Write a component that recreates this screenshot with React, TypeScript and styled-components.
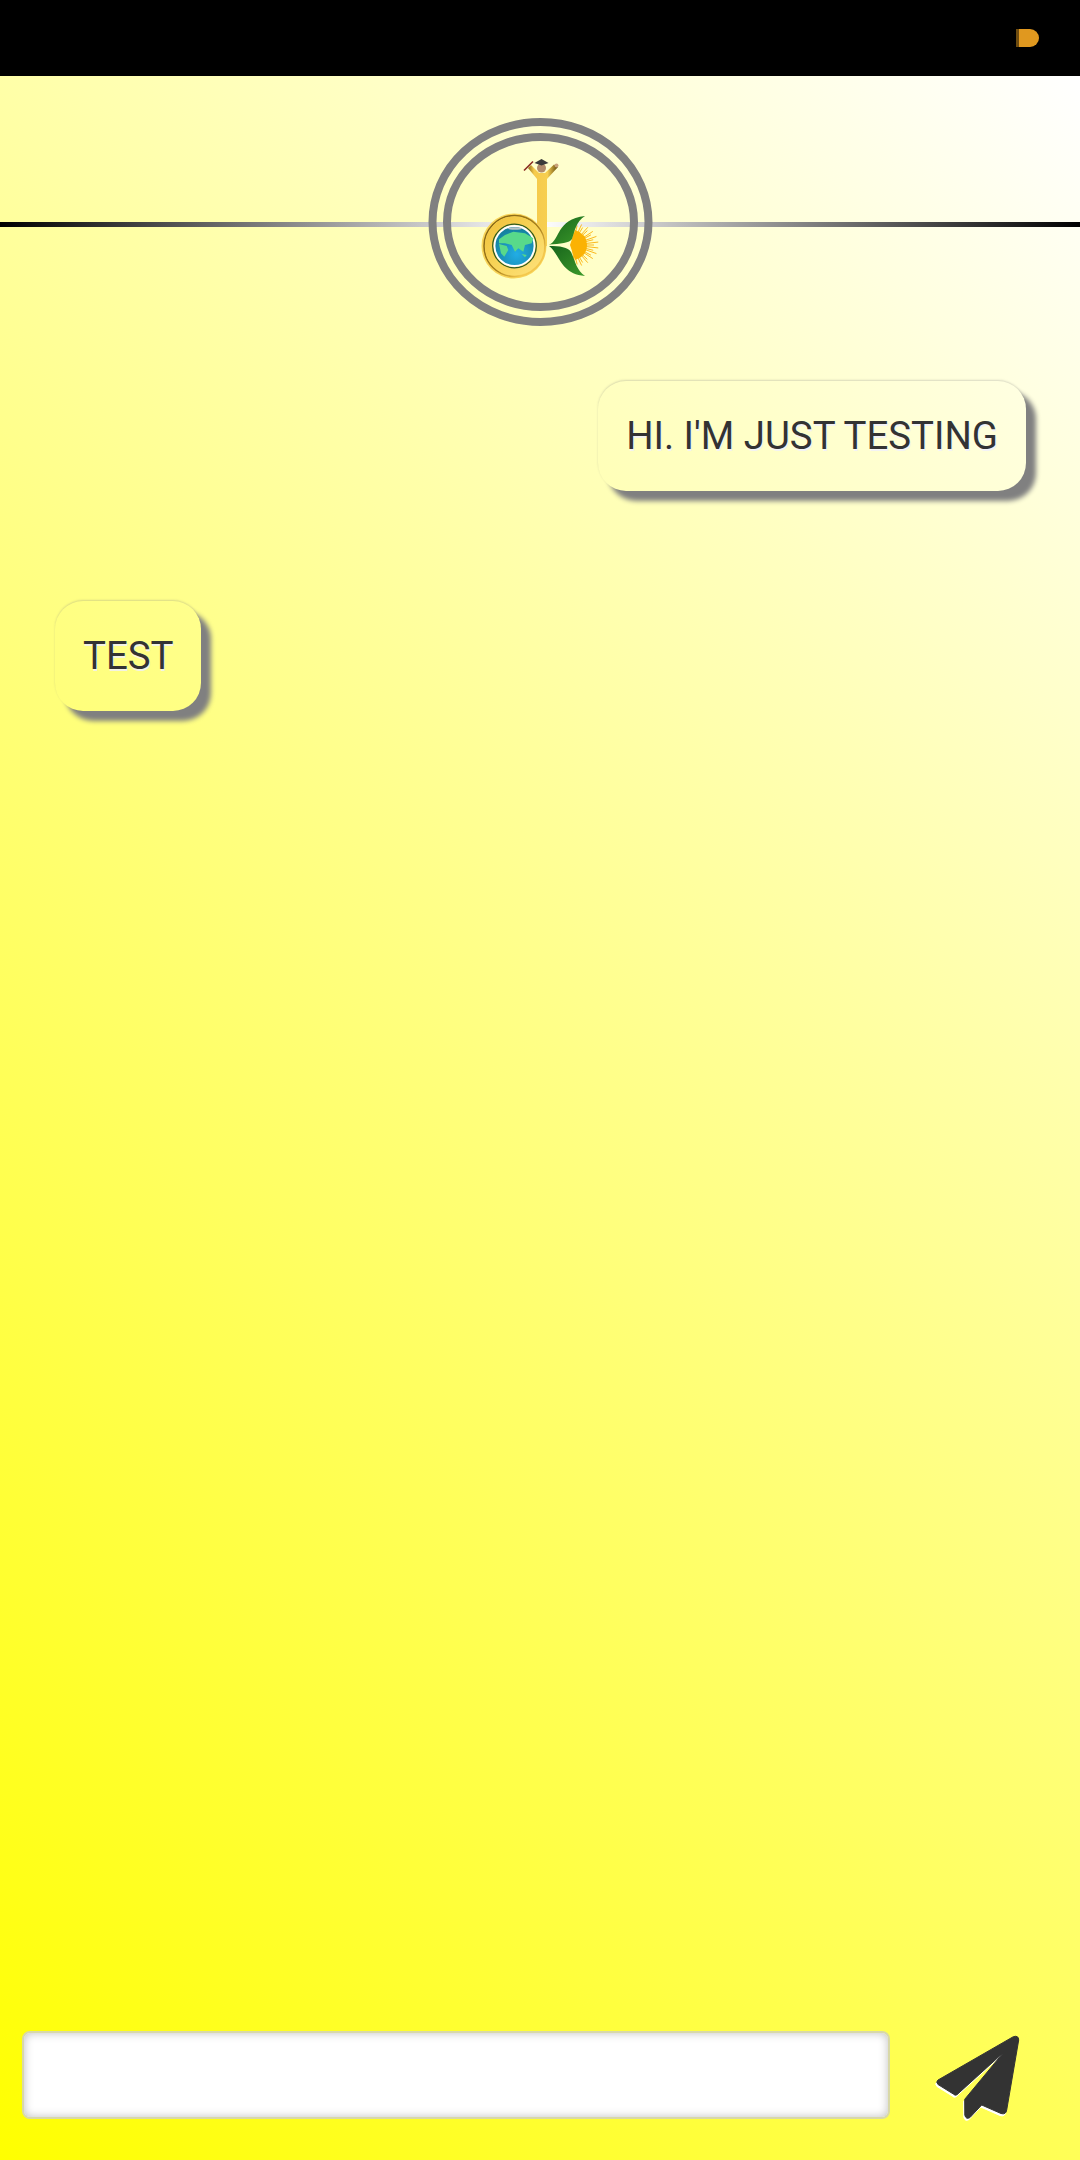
import { createGlobalStyle, styled } from "styled-components";

const GlobalStyle = createGlobalStyle`
  html, body {
    margin: 0;
    padding: 0;
  }
  body {
    font-family: Roboto, "Liberation Sans", sans-serif;
  }
`;

function Logo() {
  const rays = Array.from({ length: 23 }, (_, i) => -84 + i * (168 / 22));
  return (
    <LogoSvg viewBox="0 0 280 240">
      <defs>
        <linearGradient id="gold" x1="0" y1="0" x2="1" y2="1">
          <stop offset="0" stopColor="#f0c23c" />
          <stop offset="0.5" stopColor="#f8d458" />
          <stop offset="1" stopColor="#fde078" />
        </linearGradient>
        <linearGradient id="rim" x1="0" y1="0" x2="1" y2="1">
          <stop offset="0" stopColor="#7d5f12" />
          <stop offset="0.55" stopColor="#a8801c" />
          <stop offset="0.8" stopColor="#f3c64e" />
        </linearGradient>
        <linearGradient id="stem" x1="0" y1="0" x2="1" y2="0">
          <stop offset="0" stopColor="#8f6c16" />
          <stop offset="0.2" stopColor="#f5ca4c" />
          <stop offset="0.65" stopColor="#f7cf50" />
          <stop offset="1" stopColor="#5f470c" />
        </linearGradient>
        <radialGradient id="sea" cx="0.55" cy="0.7" r="0.75">
          <stop offset="0" stopColor="#22ade6" />
          <stop offset="1" stopColor="#127a92" />
        </radialGradient>
        <linearGradient id="leaf" x1="0" y1="0" x2="1" y2="1">
          <stop offset="0" stopColor="#17641c" />
          <stop offset="1" stopColor="#3c9a2a" />
        </linearGradient>
      </defs>

      <ellipse cx="140.5" cy="122" rx="108" ry="100" fill="none" stroke="#808080" strokeWidth="8" />
      <ellipse cx="140.5" cy="122" rx="93.500" ry="85" fill="none" stroke="#808080" strokeWidth="8" />

      {/* sun */}
      <g stroke="#fbb91e" strokeWidth="1">
        {rays.map((a, i) => (
          <line
            key={a}
            x1="172"
            y1="145"
            x2={172 + (i % 2 ? 22 : 26.5) * Math.cos((a * Math.PI) / 180)}
            y2={145 + (i % 2 ? 20 : 22) * Math.sin((a * Math.PI) / 180)}
          />
        ))}
      </g>
      <path d="M170 145 L175 130 Q187 134 187 145 Q187 156 175 160 Z" fill="#fbb204" />

      {/* leaves */}
      <path d="M149 144.500 C160 141 156 119 185 116 C176 122 175 130 172 139 C170 143 160 144 149 144.500 Z" fill="url(#leaf)" />
      <path d="M149 146 C160 146 168 147 171 152 C175 160 176 170 185 176 C160 174 160 154 149 146 Z" fill="url(#leaf)" />

      {/* stem and arms */}
      <path d="M128 68 L137 79 L137 146 L147 146 L147 79 L158 67 L154 64.500 L145 73 L139 73 L131 65 Z" fill="url(#stem)" />
      <line x1="124" y1="70.500" x2="133" y2="61.500" stroke="#8a2a20" strokeWidth="1.6" />
      <circle cx="156.500" cy="65.500" r="2" fill="#c9a27a" />
      <circle cx="141.500" cy="68" r="4.500" fill="#b28b6b" />
      <path d="M134.500 63 L141.500 59 L148.500 63 L141.500 65.500 Z" fill="#3a3a3a" />

      {/* bowl */}
      <circle cx="114" cy="146" r="32.500" fill="#f8d458" />
      <circle cx="114.500" cy="146" r="30.500" fill="none" stroke="url(#rim)" strokeWidth="1.500" />
      <circle cx="114.500" cy="146" r="25.500" fill="none" stroke="url(#gold)" strokeWidth="8" />
      <circle cx="114.500" cy="146" r="21.800" fill="none" stroke="#2d5a22" strokeWidth="1.300" />
      <circle cx="114.500" cy="146" r="20" fill="url(#sea)" stroke="#fff" strokeWidth="1.800" />
      <ellipse cx="115" cy="128.500" rx="7" ry="1.300" fill="#b9c2c4" />
      <path
        d="M99 139.300 L105 135 L113.300 131.700 L125 133.300 L133.300 138.300 L131.700 143.300 L125 145 L123.300 151.700 L118.300 148.300 L115 151.700 L111.700 145 L105 143.300 L99 143.300 Z"
        fill="#58d98a"
      />
      <path d="M99 144 L106.700 146 L108.300 150 L104.300 156.700 L101 153.300 Z M121.700 154 L126.700 155 L125 157.300 Z" fill="#58d98a" />
    </LogoSvg>
  );
}

function App() {
  return (
    <>
      <GlobalStyle />
      <Page>
        <StatusBar>
          <BatteryMark />
        </StatusBar>
        <Main>
          <Header>
            <Divider />
            <Logo />
          </Header>
          <Messages>
            <Bubble $mine>HI. I'M JUST TESTING</Bubble>
            <Bubble>TEST</Bubble>
          </Messages>
          <Composer>
            <MessageInput />
            <SendButton aria-label="Send">
              <svg width="90" height="90" viewBox="0 0 90 90">
                <path
                  d="M83.300 6.700 Q88.500 5 88.700 10 L76.700 80 Q76 85 71 83.500 L51.700 75 L40 87.500 Q36 90 34.800 85 L34.700 69.300 L73.300 22.700 L27 64.700 Q25 66 23.300 64 L8 54.500 Q5.500 52 8 50 Z"
                  fill="#333"
                  stroke="#333"
                  strokeWidth="1"
                  strokeLinejoin="round"
                />
              </svg>
            </SendButton>
          </Composer>
        </Main>
      </Page>
    </>
  );
}

const Page = styled.div`
  display: flex;
  flex-direction: column;
  width: 1080px;
  height: 2160px;
  overflow: hidden;
`;

const StatusBar = styled.div`
  flex: 0 0 76px;
  display: flex;
  justify-content: flex-end;
  align-items: flex-start;
  padding: 29px 41px 0 0;
  box-sizing: border-box;
  background: #000;
`;

const BatteryMark = styled.div`
  width: 20px;
  height: 18px;
  background: #e0981f;
  border-left: 3px solid #6e4c10;
  border-radius: 0 9px 9px 0;
`;

const Main = styled.main`
  flex: 1;
  display: flex;
  flex-direction: column;
  background: linear-gradient(45deg, #ffff00, #ffffff);
`;

const Header = styled.header`
  position: relative;
  height: 280px;
  flex: none;
`;

const Divider = styled.div`
  position: absolute;
  left: 0;
  right: 0;
  top: 146px;
  height: 5px;
  background: linear-gradient(to right, #000, #fff, #000);
`;

const LogoSvg = styled.svg`
  position: absolute;
  left: 400px;
  top: 24px;
  width: 280px;
  height: 240px;
`;

const Messages = styled.section`
  flex: 1;
  display: flex;
  flex-direction: column;
  gap: 110px;
  padding: 25px 54px 0 55px;
`;

const Bubble = styled.div<{ $mine?: boolean }>`
  align-self: ${(p) => (p.$mine ? "flex-end" : "flex-start")};
  height: 110px;
  display: flex;
  align-items: center;
  padding: 0 28px 2px;
  box-sizing: border-box;
  border-radius: 28px;
  box-shadow: 10px 10px 5px #808080, 0 -1px 2px rgba(128, 128, 128, 0.3);
  font-size: 38.4px;
  color: #333;
  text-shadow: 1px 2px 0 rgba(240, 240, 255, 0.8);
  white-space: nowrap;
`;

const Composer = styled.div`
  flex: none;
  display: flex;
  align-items: center;
  justify-content: space-between;
  padding: 0 60px 40px 22px;
`;

const MessageInput = styled.input`
  width: 868px;
  height: 88px;
  box-sizing: border-box;
  border: 2px solid #d8d8a8;
  border-radius: 8px;
  background: #fff;
  box-shadow: inset 0 0 10px rgba(0, 0, 0, 0.25);
  outline: none;
`;

const SendButton = styled.button`
  display: flex;
  width: 90px;
  height: 90px;
  padding: 0;
  border: none;
  background: none;
  filter: drop-shadow(-1px 2px 0 #fff);
`;

export default App;
